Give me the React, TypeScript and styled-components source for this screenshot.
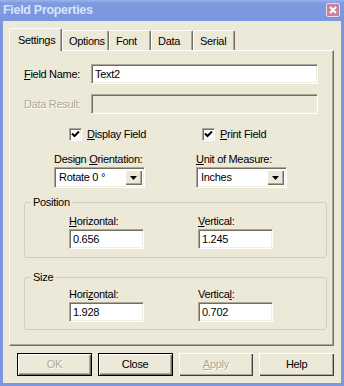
import React from "react";
import styled, { createGlobalStyle } from "styled-components";

const Global = createGlobalStyle`
  html, body { margin: 0; padding: 0; background: #ece9d8; }
  body { font-family: "Liberation Sans", Arial, sans-serif; font-size: 11px; letter-spacing: -0.3px; color: #000; }
  * { box-sizing: border-box; }
`;

const Window = styled.div`
  width: 344px;
  height: 386px;
  display: flex;
  flex-direction: column;
  background: #7b97de;
  padding: 0 3px 3px 3px;
`;

const TitleBar = styled.div`
  height: 21px;
  flex: 0 0 21px;
  display: flex;
  align-items: center;
  justify-content: space-between;
  margin: 0 -3px;
  padding: 0 4px 0 3px;
  background: linear-gradient(#9cb3ec 0px, #7f9be0 3px, #7a96df 18px, #7b97de 21px);
`;

const Title = styled.span`
  font-weight: bold;
  font-size: 12.5px;
  letter-spacing: -0.3px;
  color: #d8e4f8;
  margin-top: -1px;
`;

const CloseBox = styled.div`
  width: 14px;
  height: 14px;
  border: 1px solid #ecd8e0;
  border-radius: 2px;
  background: #c98399;
  display: flex;
  align-items: center;
  justify-content: center;
  margin-top: -2px;
`;

const Body = styled.div`
  flex: 1;
  background: #ece9d8;
  display: flex;
  flex-direction: column;
  padding: 7px 7px 0 6px;
`;

const TabStrip = styled.div`
  display: flex;
  align-items: flex-end;
  height: 22px;
  position: relative;
  z-index: 1;
`;

const Tab = styled.div<{ $active?: boolean; $w: number }>`
  width: ${(p) => p.$w}px;
  height: ${(p) => (p.$active ? 23 : 20)}px;
  margin-bottom: ${(p) => (p.$active ? -1 : 0)}px;
  background: #ece9d8;
  border-top: 1px solid #fff;
  border-left: 1px solid #fff;
  border-right: 1px solid #716f64;
  box-shadow: inset -1px 0 #aca899;
  border-radius: 2px 2px 0 0;
  display: flex;
  align-items: center;
  padding-left: ${(p) => (p.$active ? 8 : 6)}px;
  padding-top: ${(p) => (p.$active ? 0 : 1)}px;
  font-size: 11px;
`;

const Panel = styled.div`
  height: 296px;
  border-top: 1px solid #fff;
  border-left: 1px solid #fff;
  border-right: 1px solid #716f64;
  border-bottom: 1px solid #716f64;
  box-shadow: inset -1px -1px #aca899;
  display: flex;
  flex-direction: column;
  padding: 13px 0 0 0;
`;

const FieldRow = styled.div<{ $mt?: number }>`
  display: flex;
  align-items: center;
  margin-top: ${(p) => p.$mt ?? 0}px;
  padding-left: 14px;
`;

const Label = styled.span<{ $disabled?: boolean; $w?: number }>`
  display: inline-block;
  width: ${(p) => (p.$w ? `${p.$w}px` : "auto")};
  line-height: 13px;
  color: ${(p) => (p.$disabled ? "#aca899" : "#000")};
  text-shadow: ${(p) => (p.$disabled ? "1px 1px 0 #fff" : "none")};
  white-space: nowrap;
`;

const U = styled.span`
  text-decoration: underline;
`;

const TextBox = styled.div<{ $w: number; $disabled?: boolean }>`
  width: ${(p) => p.$w}px;
  height: 20px;
  background: ${(p) => (p.$disabled ? "#ece9d8" : "#fff")};
  border: 1px solid;
  border-color: #aca899 #fff #fff #aca899;
  box-shadow: inset 1px 1px #716f64, inset -1px -1px #f1efe2;
  padding: 0 3px;
  display: flex;
  align-items: center;
  line-height: 13px;
`;

const CheckRow = styled.div`
  display: grid;
  grid-template-columns: 133px auto;
  margin-top: 14px;
  padding-left: 59px;
`;

const CheckItem = styled.div`
  display: flex;
  align-items: center;
  gap: 5px;
  height: 13px;
`;

const CheckBox = styled.div`
  width: 13px;
  height: 13px;
  background: #fff;
  border: 1px solid;
  border-color: #aca899 #fff #fff #aca899;
  box-shadow: inset 1px 1px #716f64, inset -1px -1px #f1efe2;
  display: flex;
  align-items: center;
  justify-content: center;
`;

const ComboRow = styled.div`
  display: grid;
  grid-template-columns: 142px auto;
  margin-top: 12px;
  padding-left: 44px;
`;

const Stack = styled.div`
  display: flex;
  flex-direction: column;
  gap: 1px;
`;

const Combo = styled.div`
  width: 91px;
  height: 21px;
  background: #fff;
  border: 1px solid;
  border-color: #aca899 #fff #fff #aca899;
  box-shadow: inset 1px 1px #716f64, inset -1px -1px #f1efe2;
  display: flex;
  align-items: stretch;
  padding: 2px;
`;

const ComboText = styled.div`
  flex: 1;
  display: flex;
  align-items: center;
  padding-left: 2px;
  line-height: 13px;
`;

const ComboButton = styled.div`
  width: 17px;
  background: #ece9d8;
  box-shadow: inset 1px 1px #fff, inset -1px -1px #716f64, inset -2px -2px #aca899;
  display: flex;
  align-items: center;
  justify-content: center;
`;

const Group = styled.fieldset<{ $mt: number; $pb: number }>`
  margin: ${(p) => p.$mt}px 6px 0 14px;
  padding: 0 0 ${(p) => p.$pb}px 0;
  border: 1px solid #d0d0bf;
  border-radius: 3px;
  min-width: 0;
`;

const Legend = styled.legend`
  margin-left: 6px;
  padding: 0 2px;
  line-height: 13px;
`;

const GroupGrid = styled.div<{ $mt: number }>`
  display: grid;
  grid-template-columns: 129px auto;
  margin-top: ${(p) => p.$mt}px;
  padding-left: 44px;
`;

const ButtonRow = styled.div`
  display: flex;
  gap: 6px;
  margin: 7px 0 0 8px;
`;

const Button = styled.div<{ $default?: boolean; $disabled?: boolean }>`
  width: 75px;
  height: 23px;
  background: #ece9d8;
  border: ${(p) => (p.$default ? "1px solid #000" : "none")};
  box-shadow: ${(p) =>
    p.$default
      ? "inset 1px 1px #fff, inset -1px -1px #716f64, inset -2px -2px #aca899"
      : "inset 1px 1px #fff, inset -1px -1px #404040, inset -2px -2px #aca899"};
  display: flex;
  align-items: center;
  justify-content: center;
  color: ${(p) => (p.$disabled ? "#aca899" : "#000")};
  text-shadow: ${(p) => (p.$disabled ? "1px 1px 0 #fff" : "none")};
  line-height: 13px;
`;

const Check = () => (
  <svg width="9" height="9" viewBox="0 0 9 9">
    <path d="M1 3.5 L3.5 6 L8 1.5" stroke="#000" strokeWidth="2" fill="none" />
  </svg>
);

const Arrow = () => (
  <svg width="7" height="4" viewBox="0 0 7 4">
    <path d="M0 0 H7 L3.5 4 Z" fill="#000" />
  </svg>
);

const CloseX = () => (
  <svg width="8" height="8" viewBox="0 0 8 8">
    <path d="M1 1 L7 7 M7 1 L1 7" stroke="#fff" strokeWidth="2" />
  </svg>
);

export default function App() {
  return (
    <>
      <Global />
      <Window>
        <TitleBar>
          <Title>Field Properties</Title>
          <CloseBox>
            <CloseX />
          </CloseBox>
        </TitleBar>
        <Body>
          <TabStrip>
            <Tab $active $w={53}>Settings</Tab>
            <Tab $w={47}>Options</Tab>
            <Tab $w={42}>Font</Tab>
            <Tab $w={42}>Data</Tab>
            <Tab $w={42}>Serial</Tab>
          </TabStrip>
          <Panel>
            <FieldRow>
              <Label $w={67}>
                <U>F</U>ield Name:
              </Label>
              <TextBox $w={227}>Text2</TextBox>
            </FieldRow>
            <FieldRow $mt={10}>
              <Label $w={67} $disabled>
                Data Result:
              </Label>
              <TextBox $w={227} $disabled />
            </FieldRow>
            <CheckRow>
              <CheckItem>
                <CheckBox>
                  <Check />
                </CheckBox>
                <Label>
                  <U>D</U>isplay Field
                </Label>
              </CheckItem>
              <CheckItem>
                <CheckBox>
                  <Check />
                </CheckBox>
                <Label>
                  <U>P</U>rint Field
                </Label>
              </CheckItem>
            </CheckRow>
            <ComboRow>
              <Stack>
                <Label>
                  Design <U>O</U>rientation:
                </Label>
                <Combo>
                  <ComboText>Rotate 0 °</ComboText>
                  <ComboButton>
                    <Arrow />
                  </ComboButton>
                </Combo>
              </Stack>
              <Stack>
                <Label>
                  <U>U</U>nit of Measure:
                </Label>
                <Combo>
                  <ComboText>Inches</ComboText>
                  <ComboButton>
                    <Arrow />
                  </ComboButton>
                </Combo>
              </Stack>
            </ComboRow>
            <Group $mt={8} $pb={8}>
              <Legend>Position</Legend>
              <GroupGrid $mt={6}>
                <Stack>
                  <Label>
                    <U>H</U>orizontal:
                  </Label>
                  <TextBox $w={75}>0.656</TextBox>
                </Stack>
                <Stack>
                  <Label>
                    <U>V</U>ertical:
                  </Label>
                  <TextBox $w={75}>1.245</TextBox>
                </Stack>
              </GroupGrid>
            </Group>
            <Group $mt={13} $pb={7}>
              <Legend>Size</Legend>
              <GroupGrid $mt={4}>
                <Stack>
                  <Label>
                    Hori<U>z</U>ontal:
                  </Label>
                  <TextBox $w={75}>1.928</TextBox>
                </Stack>
                <Stack>
                  <Label>
                    Vertica<U>l</U>:
                  </Label>
                  <TextBox $w={75}>0.702</TextBox>
                </Stack>
              </GroupGrid>
            </Group>
          </Panel>
          <ButtonRow>
            <Button $default $disabled>OK</Button>
            <Button $default>Close</Button>
            <Button $disabled>
              <U>A</U>pply
            </Button>
            <Button>Help</Button>
          </ButtonRow>
        </Body>
      </Window>
    </>
  );
}
